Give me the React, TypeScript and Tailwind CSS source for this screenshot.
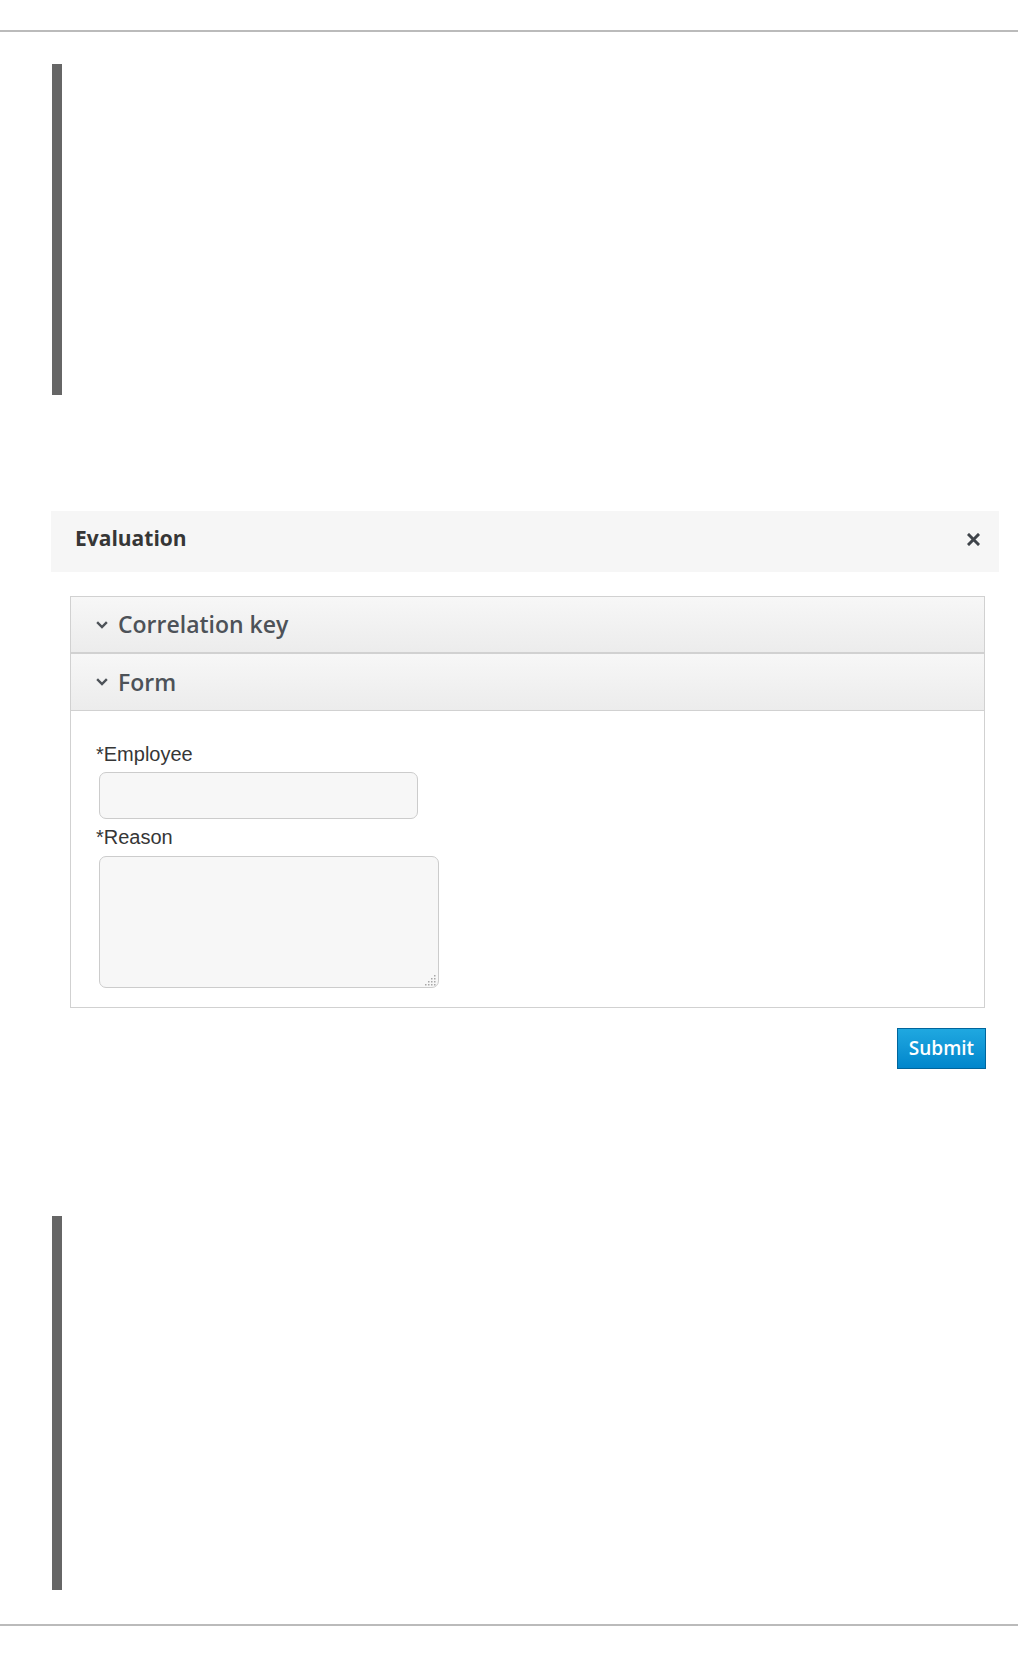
import { useState } from 'react';

function Chevron() {
  return (
    <svg width="12" height="8" viewBox="0 0 12 8" className="shrink-0">
      <path d="M2 2 L6 6 L10 2" fill="none" stroke="#4d5258" strokeWidth="2.4" strokeLinecap="square" />
    </svg>
  );
}

function PanelHeading({ title, last }: { title: string; last?: boolean }) {
  return (
    <div
      className={`flex h-[57px] items-center gap-[10px] bg-gradient-to-b from-[#f7f7f7] to-[#ececec] pl-[25px] ${
        last ? 'border-b border-[#d1d1d1]' : 'border-b-2 border-[#d1d1d1]'
      }`}
    >
      <Chevron />
      <span className="text-[23px] font-semibold leading-none text-[#4d5258]" style={{ fontFamily: '"Open Sans", sans-serif' }}>
        {title}
      </span>
    </div>
  );
}

// dotted grip in the textarea corner
function Grip() {
  const dots = [
    [10, 2],
    [10, 5],
    [7, 5],
    [10, 8],
    [7, 8],
    [4, 8],
    [10, 11],
    [7, 11],
    [4, 11],
    [1, 11],
  ];
  return (
    <svg width="13" height="13" viewBox="0 0 13 13" className="pointer-events-none absolute bottom-[2px] right-[2px]">
      {dots.map(([x, y], i) => (
        <rect key={i} x={x} y={y} width="1.5" height="1.5" fill="#a8a8a8" />
      ))}
    </svg>
  );
}

export default function App() {
  const [employee, setEmployee] = useState('');
  const [reason, setReason] = useState('');

  return (
    <div className="min-h-[1656px] w-[1020px] bg-white pt-[30px]">
      <div className="h-[2px] w-[1018px] bg-[#bbbbbb]" />

      {/* upper quote bar */}
      <div className="ml-[52px] mt-[32px] h-[331px] w-[10px] bg-[#666666]" />

      {/* modal */}
      <div className="ml-[51px] mt-[116px] w-[948px]">
        <div className="flex h-[61px] items-start justify-between bg-[#f6f6f6] pl-[24px] pr-[19px] pt-[13px]">
          <h4
            className="text-[21px] font-bold leading-[28px] text-[#363636]"
            style={{ fontFamily: '"Open Sans", sans-serif' }}
          >
            Evaluation
          </h4>
          <button className="mt-[8px] flex h-[14px] w-[14px] items-center justify-center">
            <svg width="13" height="13" viewBox="0 0 13 13">
              <path d="M2 2 L11 11 M11 2 L2 11" stroke="#3f444a" strokeWidth="3" strokeLinecap="square" />
            </svg>
          </button>
        </div>

        <div className="ml-[19px] mt-[24px] w-[915px] border border-[#d1d1d1]">
          <PanelHeading title="Correlation key" />
          <PanelHeading title="Form" last />
          <div
            className="flex flex-col pb-[19px] pl-[25px] pt-[32px] text-[20px] text-[#363636]"
            style={{ fontFamily: '"Liberation Sans", Arial, sans-serif' }}
          >
            <label className="leading-[23px]">*Employee</label>
            <input
              value={employee}
              onChange={(e) => setEmployee(e.target.value)}
              className="ml-[3px] mt-[6px] h-[47px] w-[319px] rounded-[7px] border border-[#cccccc] bg-[#f7f7f7] px-3 outline-none"
            />
            <label className="mt-[7px] leading-[23px]">*Reason</label>
            <div className="relative ml-[3px] mt-[7px] h-[132px] w-[340px]">
              <textarea
                value={reason}
                onChange={(e) => setReason(e.target.value)}
                className="h-full w-full resize-none rounded-[7px] border border-[#cccccc] bg-[#f7f7f7] px-3 py-2 outline-none"
              />
              <Grip />
            </div>
          </div>
        </div>

        <div className="mr-[13px] mt-[20px] flex justify-end">
          <button
            className="h-[41px] w-[89px] border border-[#00659c] bg-gradient-to-b from-[#1fa8e0] to-[#0086cc] text-[19px] font-semibold text-white"
            style={{ fontFamily: '"Open Sans", sans-serif' }}
          >
            Submit
          </button>
        </div>
      </div>

      {/* lower quote bar */}
      <div className="ml-[52px] mt-[147px] h-[374px] w-[10px] bg-[#666666]" />

      <div className="mt-[34px] h-[2px] w-[1018px] bg-[#bbbbbb]" />
    </div>
  );
}
